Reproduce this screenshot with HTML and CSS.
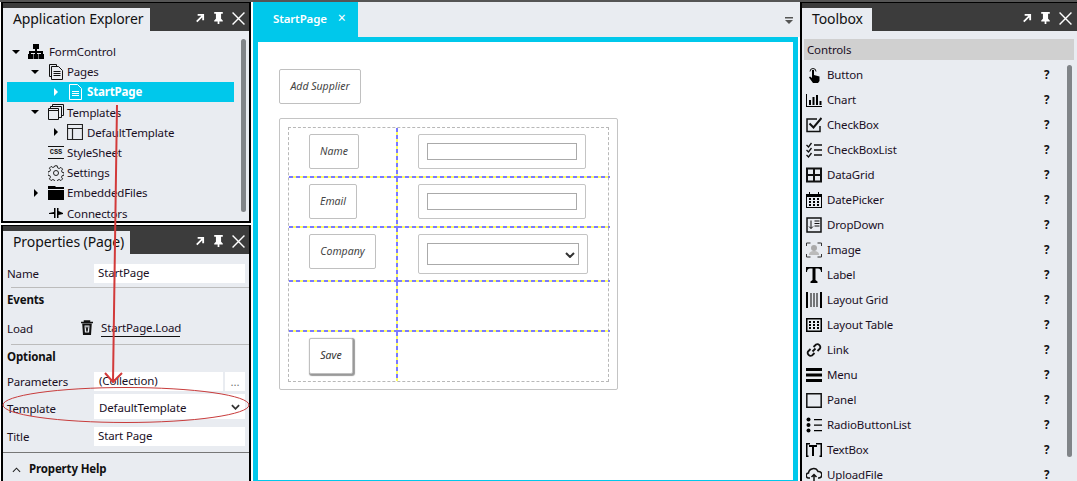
FILE: index.html
```html
<!DOCTYPE html>
<html lang="en">
<head>
<meta charset="utf-8">
<title>StartPage</title>
<link rel="stylesheet" href="styles.css">
</head>
<body>
<div class="app">
  <div class="left">
    <section class="panel explorer">
      <header class="phead"><h2 class="ptab">Application Explorer</h2>
        <span class="pbtns">
          <svg class="pb" viewBox="0 0 12 12"><path d="M3 10 9 4M4 2.500h6v6" fill="none" stroke="#fff" stroke-width="2"/></svg>
          <svg class="pb" viewBox="0 0 12 14"><path d="M1 0h10v2H9v6l2 2v1H7v3H5v-3H1v-1l2-2V2H1z" fill="#fff"/></svg>
          <svg class="pb px" viewBox="0 0 12 12"><path d="M.5.5l11 11M11.500.5l-11 11" stroke="#fff" stroke-width="1.300"/></svg>
        </span>
      </header>
      <div class="tree">
        <div class="node l0"><svg class="tw" viewBox="0 0 8 8"><path d="M0 2h8L4 6z"/></svg>
          <svg class="ti" viewBox="0 0 16 16"><path d="M5 0h6v5H9v2h6v3h1v5h-5v-5h2V9H9v1h1.500v5h-5v-5H7V9H3v1h2v5H0v-5h1V7h6V5H5z"/></svg><span>FormControl</span></div>
        <div class="node l1"><svg class="tw" viewBox="0 0 8 8"><path d="M0 2h8L4 6z"/></svg>
          <svg class="ti" viewBox="0 0 16 16" fill="none" stroke="#111"><path d="M3.500 12.500H1.500v-12h7v2M3.500 2.500h7l4 4v9h-11zM5.500 7.500h7M5.500 9.500h7M5.500 11.500h7"/></svg><span>Pages</span></div>
        <div class="node l2 sel"><svg class="tw" viewBox="0 0 8 8"><path d="M2 0v8l4-4z" fill="#fff"/></svg>
          <svg class="ti" viewBox="0 0 16 16" fill="none" stroke="#fff"><path d="M2.500.5h8l4 4v11h-12zM5 7.500h7M5 9.500h7M5 11.500h7"/></svg><span>StartPage</span></div>
        <div class="node l1"><svg class="tw" viewBox="0 0 8 8"><path d="M0 2h8L4 6z"/></svg>
          <svg class="ti" viewBox="0 0 16 16" fill="none" stroke="#111"><path d="M4.500 3V.500h11v11H13M2.500 5V2.500h11v11H11M.5 4.500h10v11H.5zM.5 6.500h10"/></svg><span>Templates</span></div>
        <div class="node l2"><svg class="tw" viewBox="0 0 8 8"><path d="M2 0v8l4-4z"/></svg>
          <svg class="ti" viewBox="0 0 16 16" fill="none" stroke="#222"><path d="M.5.5h15v15H.5zM.5 4.500h15M5.500 4.500v11" stroke-width="1.200"/></svg><span>DefaultTemplate</span></div>
        <div class="node nt"><span class="css">CSS</span><span>StyleSheet</span></div>
        <div class="node nt"><svg class="ti" viewBox="0 0 16 16" fill="none" stroke="#222"><circle cx="8" cy="8" r="2.500"/><path d="M6.800.8h2.400l.4 2 1.600.7 1.700-1.100 1.700 1.700-1.100 1.700.7 1.600 2 .4v2.400l-2 .4-.7 1.600 1.100 1.700-1.700 1.700-1.700-1.100-1.600.7-.4 2H6.800l-.4-2-1.600-.7-1.700 1.100-1.700-1.700 1.100-1.700-.7-1.600-2-.4V6.800l2-.4.7-1.600-1.100-1.700 1.700-1.700 1.700 1.100 1.600-.7z"/></svg><span>Settings</span></div>
        <div class="node ef"><svg class="tw" viewBox="0 0 8 8"><path d="M2 0v8l4-4z"/></svg>
          <svg class="ti" viewBox="0 0 16 16"><path d="M0 1h7l1 1h8v2H0zM0 5h16v10H0z"/></svg><span>EmbeddedFiles</span></div>
        <div class="node nt"><svg class="ti" viewBox="0 0 16 16"><path d="M6 3h1.500v10H6V9H1V8l5-1zM9 3h1.500v3L15 8v1l-4.500 1v3H9z"/></svg><span>Connectors</span></div>
      </div>
      <div class="vbar ebar"></div>
    </section>
    <div class="split"></div>
    <section class="panel props">
      <header class="phead"><h2 class="ptab">Properties (Page)</h2>
        <span class="pbtns">
          <svg class="pb" viewBox="0 0 12 12"><path d="M3 10 9 4M4 2.500h6v6" fill="none" stroke="#fff" stroke-width="2"/></svg>
          <svg class="pb" viewBox="0 0 12 14"><path d="M1 0h10v2H9v6l2 2v1H7v3H5v-3H1v-1l2-2V2H1z" fill="#fff"/></svg>
          <svg class="pb px" viewBox="0 0 12 12"><path d="M.5.5l11 11M11.500.5l-11 11" stroke="#fff" stroke-width="1.300"/></svg>
        </span>
      </header>
      <div class="pbody">
        <div class="prow r1"><label>Name</label><div class="fld">StartPage</div></div>
        <hr class="rule">
        <div class="sect">Events</div>
        <div class="prow r2"><label>Load</label>
          <svg class="trash" viewBox="0 0 14 16"><path d="M1 2.500h12M4.500 2.500V1h5v1.500" fill="none" stroke="#111" stroke-width="1.500"/><path d="M2.200 3.500h9.600L11 15H3zM4.500 5.500l.4 7h4.200l.4-7z" fill="#111" fill-rule="evenodd"/><path d="M6 6.500l1 5 1-5" stroke="#111" fill="none"/></svg>
          <span class="evt">StartPage.Load</span></div>
        <hr class="rule">
        <div class="sect">Optional</div>
        <div class="prow r3"><label>Parameters</label><div class="fld sm">(Collection)</div><div class="dots">...</div></div>
        <div class="prow r4"><label>Template</label><div class="fld tall">DefaultTemplate<svg class="chev" viewBox="0 0 10 6"><path d="M1 1l4 4 4-4" fill="none" stroke="#333" stroke-width="2"/></svg></div></div>
        <div class="prow r5"><label>Title</label><div class="fld">Start Page</div></div>
        <div class="help"><svg class="up" viewBox="0 0 10 6"><path d="M1 5l4-4 4 4" fill="none" stroke="#222" stroke-width="1.200"/></svg><b>Property Help</b></div>
      </div>
    </section>
  </div>

  <main class="center">
    <div class="tabs"><div class="tab">StartPage<span class="tx">×</span></div>
      <svg class="menu" viewBox="0 0 8 7"><path d="M0 0h8v1.500H0zM0 3h8L4 7z" fill="#555"/></svg>
    </div>
    <div class="canvas">
      <div class="box addbtn">Add Supplier</div>
      <div class="form">
        <div class="table">
          <div class="cell lc rb h1"><div class="box lab w-name">Name</div></div>
          <div class="cell rc h1"><div class="group w-g1"><div class="inp"></div></div></div>
          <div class="cell lc rb h1"><div class="box lab w-email">Email</div></div>
          <div class="cell rc h1"><div class="group w-g1"><div class="inp"></div></div></div>
          <div class="cell lc rb h2"><div class="box lab w-comp">Company</div></div>
          <div class="cell rc h2"><div class="group w-g2"><div class="inp sel2"><svg class="chev2" viewBox="0 0 10 6"><path d="M1 1l4 4 4-4" fill="none" stroke="#333" stroke-width="2"/></svg></div></div></div>
          <div class="cell lc rb h1"></div>
          <div class="cell rc h1"></div>
          <div class="cell lc rb last"><div class="box lab save">Save</div></div>
          <div class="cell rc last"></div>
        </div>
      </div>
    </div>
  </main>

  <aside class="panel toolbox">
    <header class="phead"><h2 class="ptab">Toolbox</h2>
      <span class="pbtns">
        <svg class="pb" viewBox="0 0 12 12"><path d="M3 10 9 4M4 2.500h6v6" fill="none" stroke="#fff" stroke-width="2"/></svg>
        <svg class="pb" viewBox="0 0 12 14"><path d="M1 0h10v2H9v6l2 2v1H7v3H5v-3H1v-1l2-2V2H1z" fill="#fff"/></svg>
        <svg class="pb px" viewBox="0 0 12 12"><path d="M.5.5l11 11M11.500.5l-11 11" stroke="#fff" stroke-width="1.300"/></svg>
      </span>
    </header>
    <div class="ctrlhead">Controls</div>
    <ul class="tools">
      <li><svg class="ic" viewBox="0 0 16 16"><path d="M4 4.500a3 3 0 0 1 6 0" fill="none" stroke="#111"/><path d="M6 3h2v5l5.500 1.500V14L12 16H7L3 10.500l1-1 2 1.500z"/></svg><span class="nm">Button</span><b class="q">?</b></li>
      <li><svg class="ic" viewBox="0 0 16 16"><path d="M0 2h1v12h15v1H0zM3 8h2v5H3zM6.500 5h2v8h-2zM10 3h2v10h-2zM13.500 9h2v4h-2z"/></svg><span class="nm">Chart</span><b class="q">?</b></li>
      <li><svg class="ic" viewBox="0 0 16 16" fill="none" stroke="#111" stroke-width="1.500"><path d="M14 9v5.500H1V2h10"/><path d="M3.500 6.500l4 4L15.500 1" stroke-width="2"/></svg><span class="nm">CheckBox</span><b class="q">?</b></li>
      <li><svg class="ic" viewBox="0 0 16 16" fill="none" stroke="#111" stroke-width="1.300"><path d="M.5 3l2 2 3-4M.5 8l2 2 3-4M.5 13l2 2 3-4M8 3h8M8 8h8M8 13h8"/></svg><span class="nm">CheckBoxList</span><b class="q">?</b></li>
      <li><svg class="ic" viewBox="0 0 16 16" fill="none" stroke="#111" stroke-width="2"><path d="M1 1.500h14v13H1zM8 1.500v13M1 8h14"/></svg><span class="nm">DataGrid</span><b class="q">?</b></li>
      <li><svg class="ic" viewBox="0 0 16 16"><path d="M0 2h3V0h1v2h8V0h1v2h3v14H0zM1 5v10h14V5z" fill-rule="evenodd"/><path d="M3 6h2v2H3zM7 6h2v2H7zM11 6h2v2h-2zM3 9h2v2H3zM7 9h2v2H7zM11 9h2v2h-2zM3 12h2v2H3zM7 12h2v2H7zM11 12h2v2h-2z"/></svg><span class="nm">DatePicker</span><b class="q">?</b></li>
      <li><svg class="ic" viewBox="0 0 16 16" fill="none" stroke="#111"><path d="M1 1h14v14H1z" stroke-width="1.500"/><path d="M5 3.500v8M3 9.500l2 2 2-2M8.500 4h5M8.500 6.500h5M8.500 9h5"/></svg><span class="nm">DropDown</span><b class="q">?</b></li>
      <li><svg class="ic" viewBox="0 0 16 16"><path d="M.5 4V1h4M11.500 1h4v3M15.500 12v3h-4M4.500 15h-4v-3" fill="none" stroke="#333"/><circle cx="8" cy="6" r="3" fill="#aaa"/><path d="M3 13c0-3 2-4 5-4s5 1 5 4z" fill="#bbb"/></svg><span class="nm">Image</span><b class="q">?</b></li>
      <li><svg class="ic" viewBox="0 0 16 16"><path d="M0 0h16v5h-1c0-2-1-3.500-3-3.500H9.500V13l2 1.500V16h-7v-1.500l2-1.500V1.500H4C2 1.500 1 3 1 5H0z"/></svg><span class="nm">Label</span><b class="q">?</b></li>
      <li><svg class="ic" viewBox="0 0 16 16"><path d="M0 0h2v16H0zM4.500 1h1v14h-1zM7.500 1h1v14h-1zM10.500 1h1v14h-1zM14 0h2v16h-2z"/></svg><span class="nm">Layout Grid</span><b class="q">?</b></li>
      <li><svg class="ic" viewBox="0 0 16 16"><path d="M0 1h16v14H0zM1.500 2.500v11h13v-11z" fill-rule="evenodd"/><path d="M3 4h2v2H3zM7 4h2v2H7zM11 4h2v2h-2zM3 7h2v2H3zM7 7h2v2H7zM11 7h2v2h-2zM3 10h2v2H3zM7 10h2v2H7zM11 10h2v2h-2z"/></svg><span class="nm">Layout Table</span><b class="q">?</b></li>
      <li><svg class="ic" viewBox="0 0 16 16" fill="none" stroke="#111" stroke-width="1.800"><path d="M6.500 9.500l3-3M7.500 5l2.500-2.500a3 3 0 0 1 4 4L11.500 9M8.500 11L6 13.500a3 3 0 0 1-4-4L4.500 7"/></svg><span class="nm">Link</span><b class="q">?</b></li>
      <li><svg class="ic" viewBox="0 0 16 16"><path d="M0 1h16v3H0zM0 6.500h16v3H0zM0 12h16v3H0z"/></svg><span class="nm">Menu</span><b class="q">?</b></li>
      <li><svg class="ic" viewBox="0 0 16 16" fill="none" stroke="#111" stroke-width="1.500"><path d="M.8 1.800h14.400v13.400H.8z"/></svg><span class="nm">Panel</span><b class="q">?</b></li>
      <li><svg class="ic" viewBox="0 0 16 16"><circle cx="2.500" cy="2.500" r="2"/><circle cx="2.500" cy="8" r="2"/><circle cx="2.500" cy="13.500" r="2"/><path d="M8 2h8v1.200H8zM8 7.500h8v1.200H8zM8 13h8v1.200H8z"/></svg><span class="nm">RadioButtonList</span><b class="q">?</b></li>
      <li><svg class="ic" viewBox="0 0 16 16"><path d="M3 3h8v2H8v9H6V5H3z"/><path d="M4 1H0v14h2.500v-1.500h-1v-11H4zM10 1h6v14h-2.500v-1.500h1v-11H10z"/></svg><span class="nm">TextBox</span><b class="q">?</b></li>
      <li><svg class="ic" viewBox="0 0 16 16" fill="none" stroke="#111" stroke-width="1.500"><path d="M4 11H3a2.500 2.500 0 0 1-.5-5A5 5 0 0 1 12 4.500 3.200 3.200 0 0 1 13 11h-1M8 15V8M5.500 10L8 7.500l2.500 2.500"/></svg><span class="nm">UploadFile</span><b class="q">?</b></li>
    </ul>
    <div class="vbar tbar"></div>
  </aside>
</div>
<svg class="overlay" viewBox="0 0 1077 481"><path d="M117 105 113 382M105 373l8 9 9-9" fill="none" stroke="#d23a3a" stroke-width="2"/><ellipse cx="126" cy="405" rx="123" ry="17.500" fill="none" stroke="#c83c3c"/></svg>
</body>
</html>
```
FILE: styles.css
```css
* { box-sizing: border-box; }
html, body { margin: 0; padding: 0; height: 100%; overflow: hidden; background: #fff; }
body { font-family: "Noto Sans", "Open Sans", sans-serif; font-size: 11.500px; letter-spacing: -0.150px; color: #1a0f1f; position: relative; }
.app { display: flex; width: 1077px; height: 481px; border-top: 2px solid #555; overflow: hidden; }
.left { width: 251px; flex: none; display: flex; flex-direction: column; background: #000; padding: 1px 2px 0 2px; border-left: 1px solid #fff; }
.panel { position: relative; background: #e9ecf1; overflow: hidden; }
.explorer { height: 218px; flex: none; }
.split { height: 5px; flex: none; margin: 0 -2px 0 -2px; background: #fff; border-top: 2px solid #000; border-bottom: 1px solid #000; }
.props { flex: 1; }
.phead { height: 28px; background: #3c3c3c; display: flex; justify-content: space-between; align-items: flex-end; }
.ptab { margin: 0; height: 23px; padding: 0 10px; background: #e9ecf1; font-size: 14px; letter-spacing: -0.100px; font-weight: 400; line-height: 22px; color: #111; white-space: nowrap; }
.explorer .ptab { width: 147px; }
.props .ptab { width: 127px; }
.pbtns { display: flex; align-items: center; gap: 8px; height: 26px; padding-right: 4px; align-self: flex-start; margin-top: 2px; }
.pb { width: 11px; height: 12px; }
.px { width: 13px; height: 13px; }
.tree { padding-top: 10.500px; }
.node { display: flex; align-items: center; height: 20.200px; white-space: nowrap; }
.tw { width: 8px; height: 8px; flex: none; }
.ti { width: 16px; height: 16px; flex: none; margin-right: 4px; }
.l0 { padding-left: 9px; }
.l0 .tw { margin-right: 8px; }
.l0 .ti { margin-right: 5px; }
.l1 { padding-left: 28px; }
.l1 .tw { margin-right: 9px; }
.l1 .ti { margin-right: 3px; }
.l2 { padding-left: 45px; margin-left: 4px; margin-right: 15px; }
.l2 .tw { margin-right: 7px; }
.sel { background: #00c8eb; color: #fff; font-weight: 700; width: 227px; }
.nt { padding-left: 45px; }
.ef { padding-left: 29px; }
.ef .tw { margin-right: 8px; }
.ef .ti { margin-right: 3px; }
.css { width: 16px; height: 13px; margin-right: 3px; border-top: 1.500px solid #111; border-bottom: 1.500px solid #111; font: 700 7px/10px "Liberation Mono", monospace; letter-spacing: 0; text-align: center; color: #111; }
.nt .ti { margin-right: 3px; }
.vbar { position: absolute; background: #808488; border-radius: 3px; width: 5px; }
.ebar { left: 238px; top: 36px; height: 173px; }
.pbody { padding: 10px 0 0 4px; }
.prow { display: flex; align-items: center; }
.prow label { width: 87px; flex: none; color: #1a0f1f; }
.fld { width: 151px; height: 19px; background: #fff; padding-left: 4px; line-height: 18px; position: relative; flex: none; }
.r1 { height: 19px; }
.rule { border: 0; height: 1px; background: #bcbcbc; margin: 4px 4px 0 4px; width: 241px; }
.sect { font-weight: 700; height: 20px; line-height: 20px; margin-top: 2px; color: #111; }
.r2 { height: 30px; margin-top: 3px; }
.r2 + .rule { margin-top: 1px; }
.prow.r2 label { width: 73px; }
.trash { width: 14px; height: 16px; flex: none; margin-right: 7px; }
.evt { border-bottom: 1px solid #111; line-height: 16px; width: 79px; white-space: nowrap; }
.r3 { height: 19px; margin-top: 5px; }
.sm { width: 129px; padding-left: 5px; }
.dots { width: 20px; height: 19px; margin-left: 2px; background: #fff; text-align: center; line-height: 19px; color: #777; }
.r4 { height: 25px; margin-top: 3px; }
.tall { height: 25px; line-height: 27px; padding-left: 5px; }
.prow.r4 label { padding-top: 3px; }
.chev { position: absolute; right: 5px; top: 10px; width: 9px; height: 6px; }
.r5 { height: 19px; margin-top: 8px; }
.help { margin: 6px 0 0 -4px; border-top: 1px solid #777; height: 40px; padding: 8px 0 0 9px; display: flex; align-items: flex-start; gap: 6px; color: #111; }
.up { width: 9px; height: 6px; margin-top: 6px; margin-right: 2px; }
.center { width: 549px; flex: none; display: flex; flex-direction: column; padding-left: 2px; }
.tabs { height: 35px; background: #e9ecf1; display: flex; justify-content: space-between; flex: none; }
.tab { width: 105px; background: #00c8eb; color: #fff; font-weight: 600; padding: 9px 0 0 20px; white-space: nowrap; }
.tx { font-weight: 400; font-size: 14px; line-height: 12px; margin-left: 11px; }
.menu { width: 8px; height: 7px; margin: 15px 7px 0 0; }
.canvas { flex: 1; width: 545px; background: #fff; border: 5px solid #00c8eb; border-bottom-width: 1px; padding: 27px 0 0 21px; }
.box { border: 1px solid #c0c0c0; border-radius: 2px; background: #fff; display: flex; align-items: center; justify-content: center; font-style: italic; font-size: 10.500px; letter-spacing: 0; color: #444; padding-bottom: 1px; }
.addbtn { width: 82px; height: 35px; }
.form { width: 339px; height: 272px; margin-top: 14px; border: 1px solid #c4c4c4; border-radius: 2px; padding: 8px; }
.table { display: grid; grid-template-columns: 109px 212px; border: 1px dashed #b8b8b8; width: 321px; height: 255px; }
.cell { display: flex; align-items: flex-start; background-repeat: no-repeat; background-position: left bottom, right top; background-size: 100% 2px, 2px 100%; }
.lc { padding: 6px 0 0 20px; }
.rc { padding: 6px 0 0 20px; background-image: repeating-linear-gradient(90deg, #7a7aff 0 4px, #ffff60 4px 7px); background-position: left bottom; background-size: 100% 2px; }
.rb { background-image: repeating-linear-gradient(90deg, #7a7aff 0 4px, #ffff60 4px 7px), repeating-linear-gradient(180deg, #7a7aff 0 4px, #ffff60 4px 7px); }
.last.rc { background-image: none; }
.last.rb { background-image: none, repeating-linear-gradient(180deg, #7a7aff 0 4px, #ffff60 4px 7px); padding-top: 6px; }
.h1 { height: 50px; }
.h2 { height: 54px; }
.last { height: 49px; }
.lab { height: 35px; }
.w-name { width: 50px; }
.w-email { width: 48px; }
.w-comp { width: 67px; }
.save { width: 44px; height: 36px; box-shadow: 1px 1px 1px 1px #999; color: #333; padding-bottom: 3px; }
.group { border: 1px solid #c4c4c4; border-radius: 2px; padding: 8px; background: #fff; }
.w-g1 { width: 168px; height: 35px; }
.w-g2 { width: 170px; height: 40px; }
.inp { height: 17px; border: 1px solid #aaa; background: #fff; }
.sel2 { height: 22px; position: relative; }
.chev2 { position: absolute; right: 3px; top: 8px; width: 10px; height: 6px; }
.toolbox { width: 277px; flex: none; border-left: 2px solid #000; border-top: 1px solid #000; }
.toolbox .ptab { width: 70px; }
.toolbox .pbtns { padding-right: 5px; }
.ctrlhead { margin: 8px 3px 0 2px; height: 21px; background: #d0d0d0; line-height: 21px; padding-left: 3px; }
.tools { list-style: none; margin: 2px 0 0; padding: 0; }
.tools li { height: 25px; display: flex; align-items: center; padding-left: 4px; }
.ic { width: 16px; height: 16px; flex: none; margin-right: 5px; }
.nm { width: 217px; flex: none; }
.q { font-weight: 700; color: #111; }
.tbar { left: 265px; top: 62px; height: 392px; }
.overlay { position: absolute; left: 0; top: 0; width: 1077px; height: 481px; pointer-events: none; }
```
